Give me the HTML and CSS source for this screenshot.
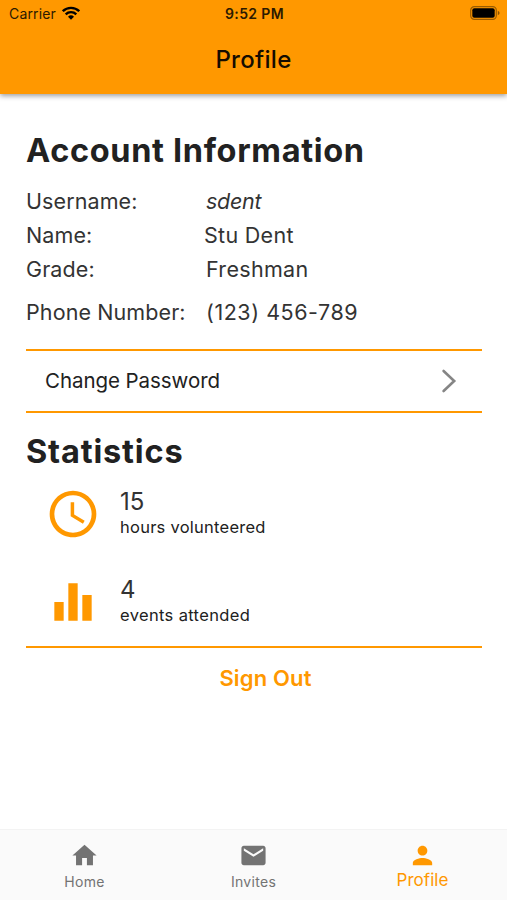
FILE: index.html
```html
<!DOCTYPE html>
<html lang="en">
<head>
<meta charset="utf-8">
<title>Profile</title>
<link rel="stylesheet" href="styles.css">
</head>
<body>
<header class="appbar">
  <div class="status">
    <div class="carrier"><span>Carrier</span>
      <svg class="wifi" viewBox="0 0 18 14"><g fill="none" stroke="currentColor" stroke-width="2.4"><path d="M.8 5.2a11.7 11.7 0 0 1 16.4 0"/><path d="M3.7 8.3a7.6 7.6 0 0 1 10.6 0"/></g><path d="M9 13.8 6 10.8a4.3 4.3 0 0 1 6 0z" fill="currentColor"/></svg>
    </div>
    <span class="time">9:52 PM</span>
    <svg class="battery" viewBox="0 0 30 14"><rect x=".7" y=".7" width="25.6" height="12.6" rx="3.6" fill="none" stroke="#000" stroke-opacity=".4" stroke-width="1.2"/><rect x="2.3" y="2.3" width="22.4" height="9.4" rx="2" fill="#000"/><path d="M27.8 4.8q1.8.8 1.8 2.2t-1.8 2.2z" fill="#000" fill-opacity=".45"/></svg>
  </div>
  <h1 class="title">Profile</h1>
</header>
<main class="content">
  <h2 class="heading account">Account Information</h2>
  <dl class="info">
    <div class="row"><dt>Username:</dt><dd class="v-user">sdent</dd></div>
    <div class="row"><dt>Name:</dt><dd class="v-name">Stu Dent</dd></div>
    <div class="row"><dt>Grade:</dt><dd>Freshman</dd></div>
    <div class="row phone"><dt>Phone Number:</dt><dd class="v-phone">(123) 456-789</dd></div>
  </dl>
  <div class="change"><span>Change Password</span>
    <svg class="chevron" viewBox="0 0 16 26"><path d="M2.6 3 13.2 13 2.6 23" fill="none" stroke="currentColor" stroke-width="2.6" stroke-linecap="round"/></svg>
  </div>
  <h2 class="heading statistics">Statistics</h2>
  <section class="stats">
    <div class="stat">
      <svg class="stat-icon" viewBox="0 0 24 24"><path d="M11.99 2C6.47 2 2 6.48 2 12s4.47 10 9.99 10C17.52 22 22 17.52 22 12S17.52 2 11.99 2zM12 20c-4.42 0-8-3.58-8-8s3.58-8 8-8 8 3.58 8 8-3.58 8-8 8zm.5-13H11v6l5.25 3.15.75-1.23-4.5-2.67z" fill="currentColor"/></svg>
      <div><p class="number">15</p><p class="label hours">hours volunteered</p></div>
    </div>
    <div class="stat">
      <svg class="stat-icon" viewBox="0 0 24 24"><path d="M4 20h4v-8H4zm6 0h4V4h-4zM16 9v11h4V9z" fill="currentColor"/></svg>
      <div><p class="number">4</p><p class="label events">events attended</p></div>
    </div>
  </section>
  <div class="signout"><span>Sign Out</span></div>
</main>
<nav class="tabs">
  <div class="tab"><svg viewBox="0 0 24 24"><path d="M10 20v-6h4v6h5v-8h3L12 3 2 12h3v8z" fill="currentColor"/></svg><span>Home</span></div>
  <div class="tab"><svg viewBox="0 0 24 24"><path d="M20 4H4c-1.1 0-1.99.9-1.99 2L2 18c0 1.1.9 2 2 2h16c1.1 0 2-.9 2-2V6c0-1.1-.9-2-2-2zm0 4-8 5-8-5V6l8 5 8-5z" fill="currentColor"/></svg><span>Invites</span></div>
  <div class="tab active"><svg viewBox="0 0 24 24"><path d="M12 12c2.21 0 4-1.79 4-4s-1.79-4-4-4-4 1.79-4 4 1.79 4 4 4zm0 2c-2.67 0-8 1.34-8 4v2h16v-2c0-2.66-5.33-4-8-4z" fill="currentColor"/></svg><span>Profile</span></div>
</nav>
</body>
</html>
```
FILE: styles.css
```css
* { box-sizing: border-box; margin: 0; padding: 0; }
body {
  width: 507px; height: 900px; overflow: hidden;
  display: flex; flex-direction: column;
  background: #fff; color: #333;
  font-family: Inter, "Liberation Sans", sans-serif;
  white-space: nowrap;
}
.appbar {
  height: 94px; background: #ff9800; color: #150c00;
  box-shadow: 0 2px 5px rgba(0,0,0,.38);
}
.status {
  height: 27px; padding: 0 7px 0 9px;
  display: grid; grid-template-columns: 1fr auto 1fr; align-items: center;
  font-size: 14px; color: #2b1a00;
}
.carrier { display: flex; align-items: center; gap: 6px; letter-spacing: .15px; }
.wifi { width: 18px; height: 14px; margin-top: -2px; color: #000; }
.time { font-weight: 600; font-size: 14px; letter-spacing: .35px; }
.battery { width: 30px; height: 14px; margin-top: -1px; justify-self: end; }
.title { font-size: 24px; line-height: 30px; font-weight: 500; text-align: center; margin-top: 18px; letter-spacing: .3px; }
.content { flex: 1; padding: 0 25px 0 26px; }
.heading { font-size: 32.5px; line-height: 40px; font-weight: 700; color: #212121; }
.account { margin-top: 37px; letter-spacing: .66px; }
.info { margin-top: 13px; font-size: 21.5px; letter-spacing: .3px; }
.row { display: grid; grid-template-columns: 180px 1fr; height: 34px; line-height: 34px; }
.row dt { letter-spacing: .1px; }
.v-user { font-style: italic; letter-spacing: -.3px; }
.v-name { margin-left: -2px; }
.v-phone { letter-spacing: .55px; }
.phone { margin-top: 9px; }
.change {
  margin-top: 20px; height: 64px; padding: 0 25px 0 19px;
  display: flex; justify-content: space-between; align-items: center;
  border-top: 2px solid #ff9800; border-bottom: 2px solid #ff9800;
  font-size: 20.5px; letter-spacing: -.06px; color: #212121;
}
.change span { margin-top: -1px; }
.chevron { width: 16px; height: 26px; color: #858585; }
.statistics { margin-top: 19px; letter-spacing: .83px; }
.stats { height: 176px; border-bottom: 2px solid #ff9800; padding: 14px 0 0 18.5px; }
.stat { display: flex; gap: 19.5px; height: 88px; }
.stat-icon { width: 56px; height: 56px; color: #ff9800; }
.number { font-size: 24px; line-height: 30px; padding-top: 1px; }
.label { font-size: 16.5px; line-height: 22px; margin-top: -1px; color: #212121; letter-spacing: .25px; }
.events { letter-spacing: .35px; }
.signout { margin-top: 15px; text-align: center; color: #ff9800; font-weight: 600; font-size: 22px; line-height: 30px; padding-left: 23px; letter-spacing: .15px; }
.tabs {
  height: 71px; background: #fafafa; border-top: 1px solid #f3f3f3;
  display: grid; grid-template-columns: repeat(3, 1fr); color: #737373;
}
.tab { display: flex; flex-direction: column; align-items: center; padding-top: 11px; }
.tab svg { width: 29px; height: 29px; }
.tab span { font-size: 14px; line-height: 20px; margin-top: 2px; letter-spacing: .3px; }
.active { color: #ff9800; }
.tab.active span { font-size: 17px; margin-top: 0; letter-spacing: .05px; }
```
